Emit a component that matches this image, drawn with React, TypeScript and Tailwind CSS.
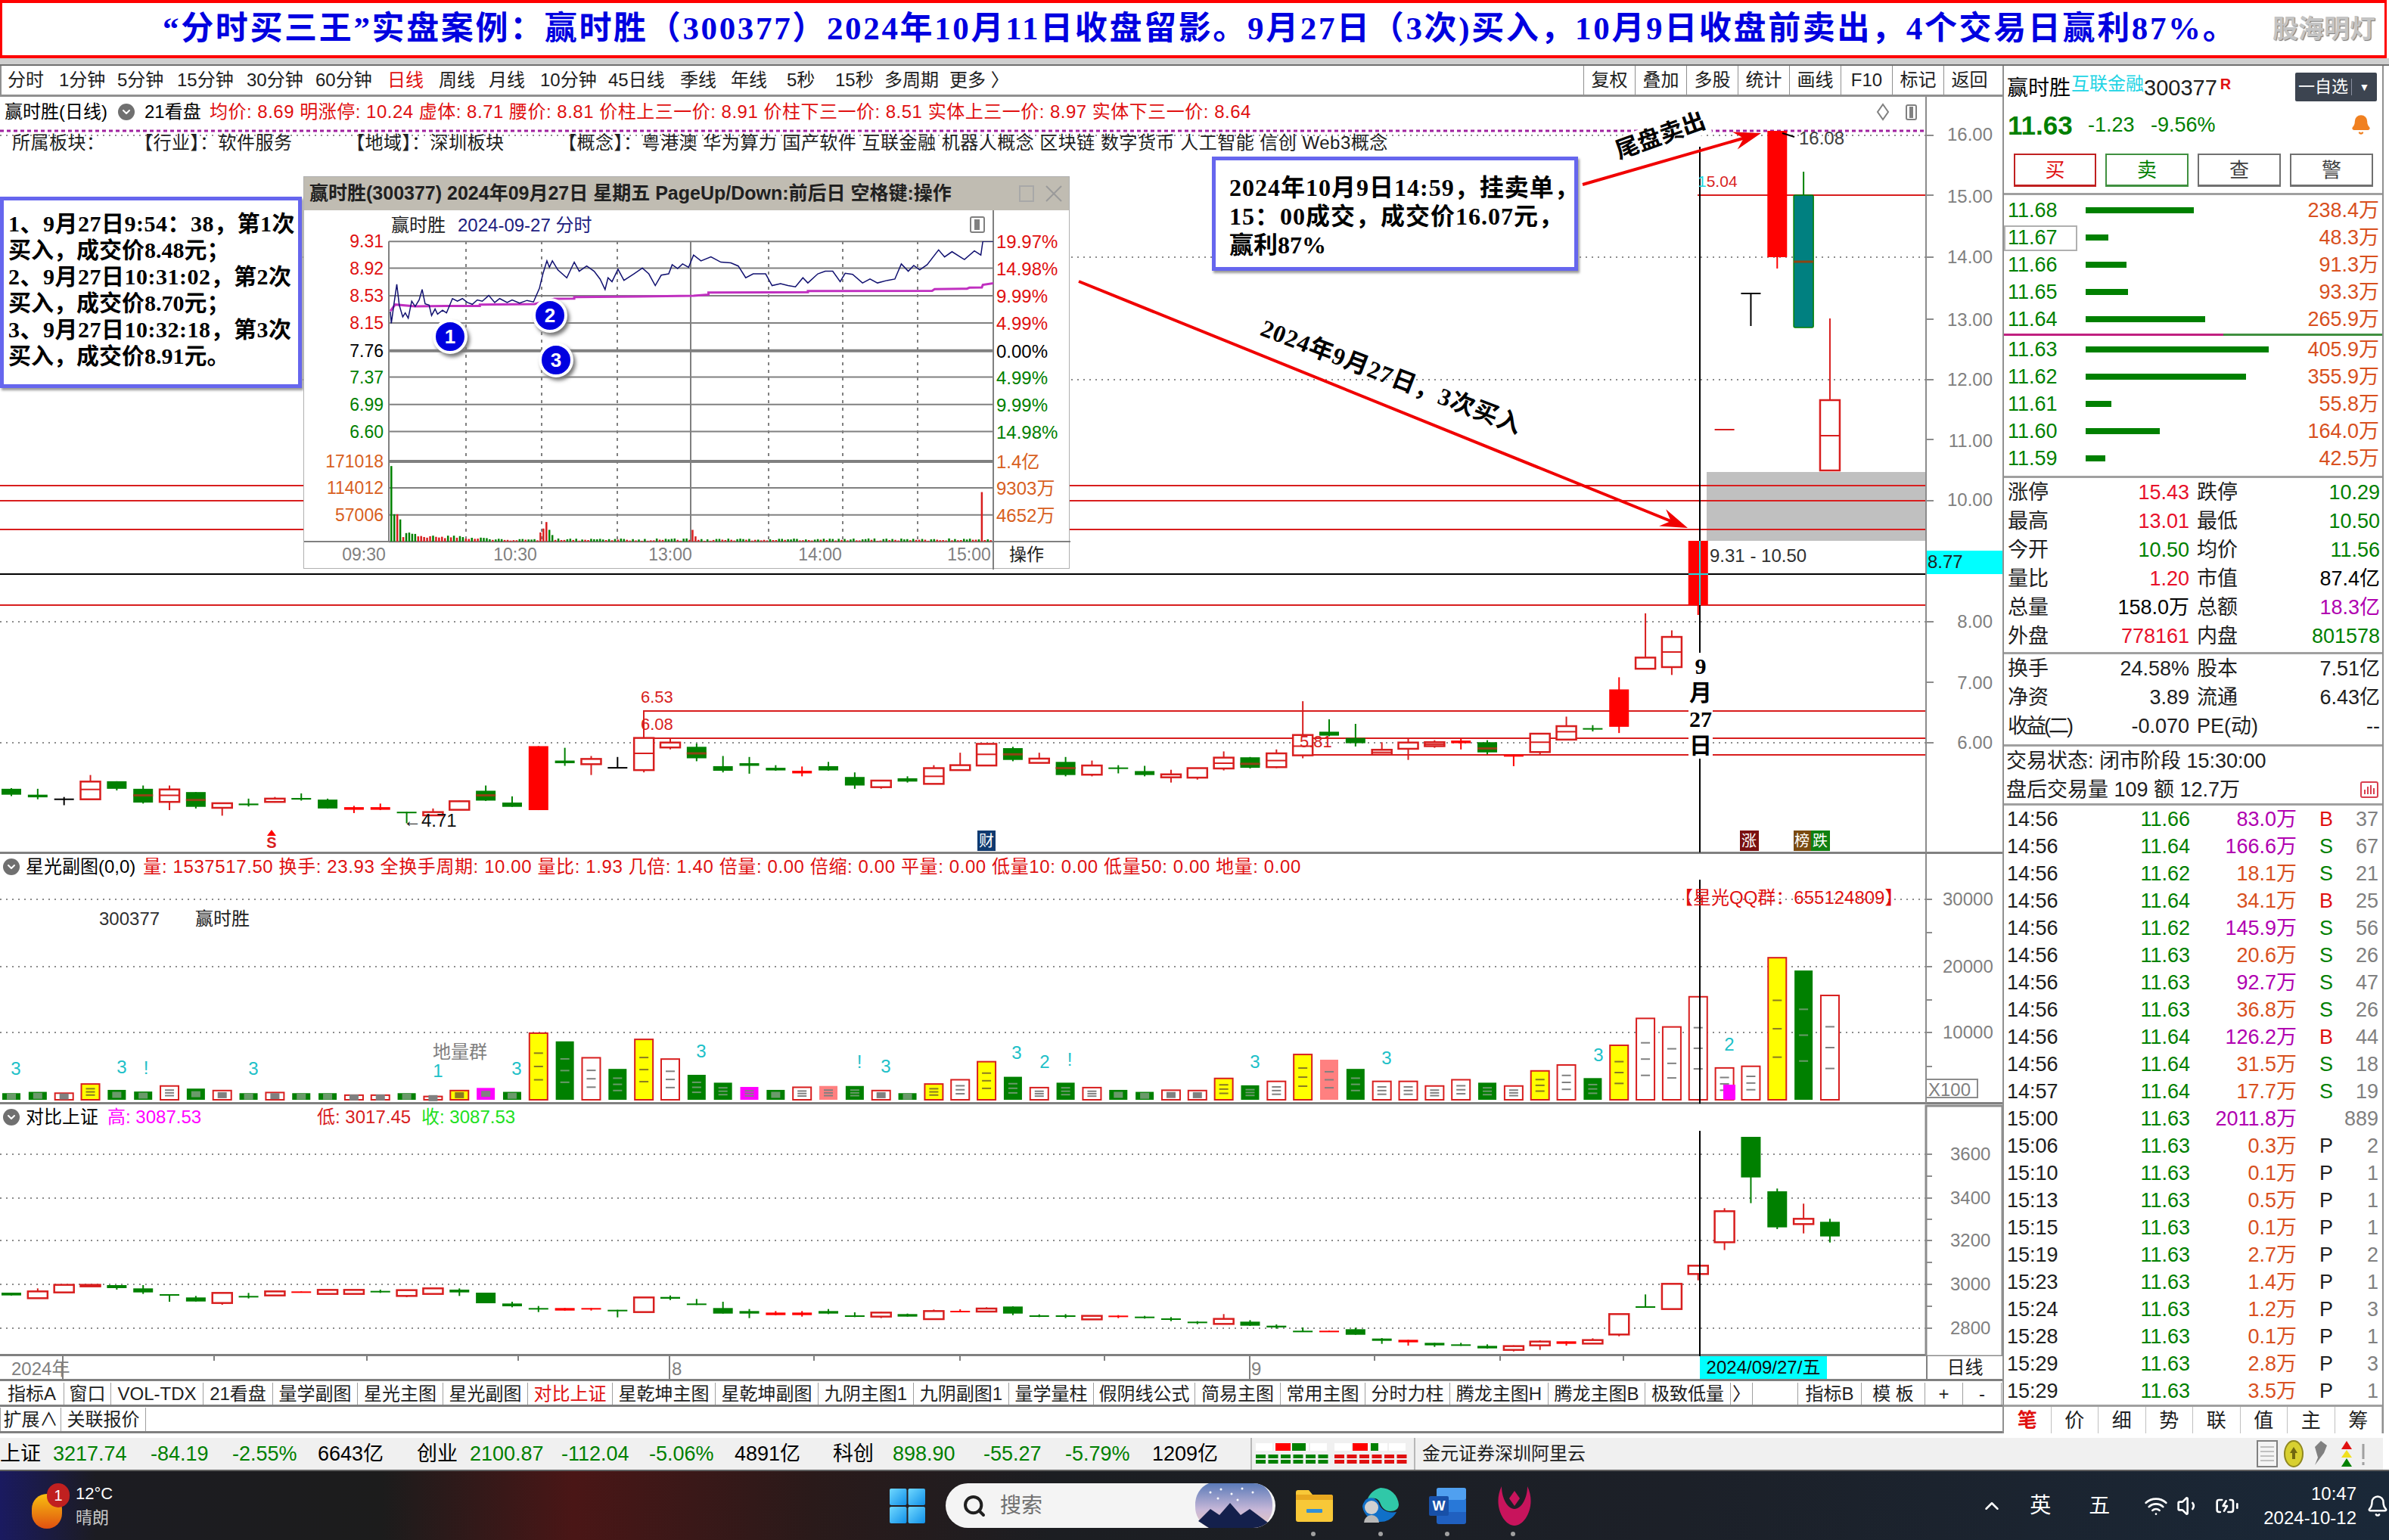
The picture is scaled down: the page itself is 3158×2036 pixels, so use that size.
import { Bell, ChevronDown, ChevronUp, Search, Volume1, Wifi, BatteryCharging } from "lucide-react";

const SANS = "font-['Liberation_Sans','Noto_Sans_CJK_SC',sans-serif]";
const SERIF = "font-['Liberation_Serif','Noto_Sans_CJK_SC',serif]";

const RED = "#ff0000";
const HOLLOW = "#d81e1e";
const GREEN = "#008000";
const GRID = "#8c8c8c";

// measured off the zoomed crops, converted to page px
const step = (i: number) => 15 + 34.84 * i;
const mainY = (z: number) => 800 + z / 2.306;
const compY = (z: number) => 1440 + z / 3;

// kind: g green, r hollow red, s solid red, k black | hi, top, bottom, lo, mid
type Candle = [string, number, number, number, number, number?];

const mainCandles: Candle[] = [
  ["g", 558, 560, 578, 582], ["g", 560, 578, 586, 592], ["k", 585, 592, 593, 610], ["r", 518, 538, 592, 592, 562],
  ["g", 537, 537, 560, 565], ["g", 550, 560, 602, 605, 580], ["r", 550, 562, 600, 625, 580], ["g", 570, 570, 615, 620, 594],
  ["r", 602, 604, 618, 642], ["g", 590, 605, 610, 614], ["r", 585, 590, 600, 602], ["g", 574, 588, 593, 596],
  ["g", 590, 593, 620, 620], ["s", 612, 616, 624, 634], ["s", 605, 616, 624, 625], ["g", 630, 630, 633, 665],
  ["r", 620, 631, 641, 641], ["r", 595, 598, 624, 624], ["g", 550, 566, 596, 597, 580], ["g", 583, 602, 615, 615],
  ["s", 430, 430, 625, 625], ["g", 435, 474, 482, 490], ["r", 460, 469, 485, 518], ["k", 463, 496, 498, 498],
  ["r", 405, 405, 503, 510, 452], ["r", 405, 419, 434, 440], ["g", 422, 432, 467, 476, 452], ["g", 460, 491, 505, 510],
  ["g", 463, 482, 490, 514], ["g", 488, 496, 504, 505], ["s", 492, 505, 513, 522], ["g", 478, 491, 504, 505],
  ["g", 510, 524, 550, 560], ["r", 534, 535, 555, 560], ["g", 522, 528, 538, 541], ["r", 488, 497, 545, 545, 522],
  ["r", 450, 488, 503, 504], ["r", 423, 423, 489, 489, 455], ["g", 432, 436, 472, 476, 455], ["r", 450, 468, 481, 482],
  ["g", 463, 478, 518, 522, 497], ["r", 474, 489, 517, 522], ["g", 488, 495, 499, 513], ["g", 490, 506, 518, 522],
  ["r", 502, 516, 525, 541], ["r", 497, 497, 526, 532], ["r", 446, 465, 498, 504, 482], ["g", 463, 464, 496, 498, 484],
  ["r", 440, 452, 494, 497, 474], ["r", 293, 396, 458, 467, 430], ["g", 348, 386, 398, 400], ["g", 362, 405, 421, 431],
  ["r", 418, 441, 456, 456, 449], ["r", 408, 419, 438, 472], ["r", 412, 418, 430, 435, 424], ["s", 406, 413, 421, 440],
  ["g", 412, 418, 449, 455, 437], ["s", 455, 456, 462, 491], ["r", 392, 392, 448, 456, 418], ["r", 340, 369, 410, 412, 386],
  ["g", 366, 375, 378, 385], ["s", 220, 257, 371, 390], ["r", 25, 160, 194, 194], ["r", 77, 97, 189, 213, 143],
];

// the last candles sit higher than the crop above, so page px directly
const lastCandles: [string, number, number, number, number, number?][] = [
  ["s", 715, 715, 800, 813],
  ["d", 568, 568, 568, 568],
  ["k", 388, 388, 388, 431],
  ["s", 173, 173, 340, 355],
  ["t", 227, 258, 433, 433, 346],
  ["r", 421, 529, 622, 622, 576],
];

const compCandles: Candle[] = [
  ["g", 807, 807, 818, 818], ["r", 790, 802, 829, 830], ["r", 776, 776, 806, 806], ["r", 776, 776, 782, 782],
  ["g", 777, 777, 789, 795], ["g", 777, 790, 806, 812], ["g", 813, 813, 818, 843], ["g", 820, 826, 842, 842],
  ["r", 807, 808, 848, 855], ["g", 808, 820, 825, 830], ["r", 801, 802, 818, 818], ["s", 802, 802, 806, 806],
  ["r", 795, 796, 812, 812], ["r", 795, 796, 812, 812], ["g", 795, 800, 805, 808], ["r", 796, 797, 820, 825],
  ["r", 790, 790, 812, 812], ["g", 790, 795, 806, 820], ["g", 807, 807, 849, 849], ["g", 843, 850, 861, 865],
  ["g", 860, 868, 873, 884], ["s", 868, 868, 878, 878], ["s", 868, 868, 873, 878], ["g", 875, 875, 880, 905],
  ["r", 825, 826, 884, 884], ["g", 818, 824, 831, 836], ["g", 832, 850, 854, 856], ["g", 843, 868, 890, 890],
  ["g", 872, 880, 890, 908], ["s", 880, 886, 896, 897], ["s", 880, 886, 896, 902], ["g", 872, 880, 890, 892],
  ["g", 885, 897, 902, 904], ["r", 882, 886, 902, 908], ["g", 890, 892, 902, 902], ["r", 874, 880, 912, 914],
  ["s", 873, 879, 884, 884], ["r", 865, 870, 882, 882], ["g", 861, 862, 890, 896], ["g", 893, 897, 902, 904],
  ["g", 892, 897, 902, 908], ["r", 897, 899, 913, 914], ["s", 896, 898, 903, 908], ["g", 899, 902, 907, 910],
  ["g", 904, 909, 914, 920], ["g", 920, 922, 926, 932], ["r", 892, 911, 931, 932], ["g", 916, 922, 938, 939],
  ["g", 933, 938, 945, 950], ["g", 945, 958, 961, 962], ["s", 958, 958, 962, 962], ["g", 946, 952, 974, 974],
  ["g", 987, 989, 998, 1010], ["s", 994, 994, 1004, 1017], ["g", 1006, 1006, 1016, 1022], ["g", 1006, 1012, 1016, 1018],
  ["g", 1012, 1018, 1028, 1029], ["r", 1016, 1019, 1034, 1040], ["r", 996, 1001, 1016, 1034], ["s", 1000, 1000, 1010, 1017],
  ["r", 988, 995, 1009, 1010], ["r", 892, 892, 973, 980], ["g", 814, 861, 865, 866], ["r", 772, 772, 872, 872],
  ["r", 700, 700, 733, 758], ["r", 472, 484, 607, 638], ["g", 189, 189, 350, 452], ["g", 394, 405, 548, 555],
  ["r", 454, 514, 535, 572], ["g", 514, 526, 584, 608],
];

const volumes: [string, number][] = [
  ["g", 1488], ["g", 1484], ["r", 1488], ["y", 1460], ["g", 1478], ["g", 1483], ["r", 1466], ["g", 1474], ["r", 1480], ["g", 1488],
  ["r", 1486], ["g", 1488], ["g", 1488], ["r", 1494], ["r", 1494], ["g", 1488], ["r", 1498], ["y", 1480], ["m", 1472], ["g", 1484],
  ["y", 1305], ["g", 1330], ["r", 1380], ["g", 1414], ["y", 1324], ["r", 1384], ["g", 1432], ["g", 1456], ["m", 1469], ["g", 1478],
  ["r", 1470], ["p", 1466], ["g", 1466], ["r", 1480], ["g", 1488], ["y", 1460], ["r", 1447], ["y", 1392], ["g", 1438], ["r", 1471],
  ["g", 1456], ["r", 1471], ["g", 1478], ["g", 1484], ["r", 1479], ["r", 1480], ["y", 1443], ["g", 1464], ["r", 1452], ["y", 1370],
  ["p", 1386], ["g", 1414], ["r", 1452], ["r", 1452], ["r", 1466], ["r", 1447], ["g", 1456], ["r", 1466], ["y", 1420], ["r", 1402],
  ["g", 1442], ["y", 1342], ["r", 1260], ["r", 1286], ["r", 1194], ["r", 1411], ["r", 1406], ["y", 1075], ["g", 1114], ["r", 1190],
];

const volNotes: [number, number, string][] = [
  [21, 1412, "3"], [161, 1408, "3"], [193, 1410, "!"], [335, 1412, "3"], [579, 1420, "1"], [683, 1412, "3"], [927, 1360, "3"],
  [1136, 1392, "!"], [1171, 1406, "3"], [1344, 1365, "3"], [1381, 1392, "2"], [1414, 1385, "!"], [1659, 1392, "3"], [1833, 1380, "3"],
  [2113, 1370, "3"], [2286, 1338, "2"],
];

const bids: [string, string, number, boolean?][] = [
  ["11.68", "238.4万", 143], ["11.67", "48.3万", 30, true], ["11.66", "91.3万", 54], ["11.65", "93.3万", 56], ["11.64", "265.9万", 158],
];
const asks: [string, string, number][] = [
  ["11.63", "405.9万", 242], ["11.62", "355.9万", 212], ["11.61", "55.8万", 34], ["11.60", "164.0万", 98], ["11.59", "42.5万", 26],
];

const stats: [string, string, string, string, string, string][] = [
  ["涨停", "15.43", "text-[#e8102a]", "跌停", "10.29", "text-[#008000]"],
  ["最高", "13.01", "text-[#e8102a]", "最低", "10.50", "text-[#008000]"],
  ["今开", "10.50", "text-[#008000]", "均价", "11.56", "text-[#008000]"],
  ["量比", "1.20", "text-[#e8102a]", "市值", "87.4亿", "text-black"],
  ["总量", "158.0万", "text-black", "总额", "18.3亿", "text-[#b000b0]"],
  ["外盘", "778161", "text-[#e8102a]", "内盘", "801578", "text-[#008000]"],
];
const stats2: [string, string, string, string][] = [
  ["换手", "24.58%", "股本", "7.51亿"],
  ["净资", "3.89", "流通", "6.43亿"],
  ["收益(二)", "-0.070", "PE(动)", "--"],
];

const trades: [string, string, string, string, string][] = [
  ["14:56", "11.66", "83.0万", "B", "37"], ["14:56", "11.64", "166.6万", "S", "67"], ["14:56", "11.62", "18.1万", "S", "21"],
  ["14:56", "11.64", "34.1万", "B", "25"], ["14:56", "11.62", "145.9万", "S", "56"], ["14:56", "11.63", "20.6万", "S", "26"],
  ["14:56", "11.63", "92.7万", "S", "47"], ["14:56", "11.63", "36.8万", "S", "26"], ["14:56", "11.64", "126.2万", "B", "44"],
  ["14:56", "11.64", "31.5万", "S", "18"], ["14:57", "11.64", "17.7万", "S", "19"], ["15:00", "11.63", "2011.8万", "", "889"],
  ["15:06", "11.63", "0.3万", "P", "2"], ["15:10", "11.63", "0.1万", "P", "1"], ["15:13", "11.63", "0.5万", "P", "1"],
  ["15:15", "11.63", "0.1万", "P", "1"], ["15:19", "11.63", "2.7万", "P", "2"], ["15:23", "11.63", "1.4万", "P", "1"],
  ["15:24", "11.63", "1.2万", "P", "3"], ["15:28", "11.63", "0.1万", "P", "1"], ["15:29", "11.63", "2.8万", "P", "3"],
  ["15:29", "11.63", "3.5万", "P", "1"],
];

const tabs: [string, string][] = [
  ["指标A", "w-[85px]"], ["窗口", "w-[62px]"], ["VOL-TDX", "w-[122px]"], ["21看盘", "w-[92px]"], ["量学副图", "w-[112px]"],
  ["星光主图", "w-[113px]"], ["星光副图", "w-[112px]"], ["对比上证", "w-[112px] text-[#e01010]"], ["星乾坤主图", "w-[136px]"],
  ["星乾坤副图", "w-[136px]"], ["九阴主图1", "w-[126px]"], ["九阴副图1", "w-[126px]"], ["量学量柱", "w-[112px]"], ["假阴线公式", "w-[134px]"],
  ["简易主图", "w-[113px]"], ["常用主图", "w-[112px]"], ["分时力柱", "w-[112px]"], ["腾龙主图H", "w-[130px]"], ["腾龙主图B", "w-[128px]"],
  ["极致低量", "w-[113px]"], ["〉", "w-[29px]"], ["", "w-[60px]"], ["指标B", "w-[84px]"], ["模 板", "w-[84px]"], ["+", "w-[50px]"], ["-", "w-[51px]"],
];

const periods: [string, string][] = [
  ["分时", "w-[68px]"], ["1分钟", "w-[77px]"], ["5分钟", "w-[79px]"], ["15分钟", "w-[92px]"], ["30分钟", "w-[91px]"], ["60分钟", "w-[95px]"],
  ["日线", "w-[68px] text-[#e01010]"], ["周线", "w-[66px]"], ["月线", "w-[68px]"], ["10分钟", "w-[90px]"], ["45日线", "w-[95px]"], ["季线", "w-[67px]"],
  ["年线", "w-[74px]"], ["5秒", "w-[64px]"], ["15秒", "w-[65px]"], ["多周期", "w-[86px]"], ["更多 〉", "w-[80px]"],
];
const tools = ["复权", "叠加", "多股", "统计", "画线", "F10", "标记", "返回"];

const market: [string, string][] = [
  ["上证", "w-[70px] text-black"], ["3217.74", "w-[129px] text-[#008000]"], ["-84.19", "w-[108px] text-[#008000]"], ["-2.55%", "w-[113px] text-[#008000]"],
  ["6643亿", "w-[131px] text-black"], ["创业", "w-[70px] text-black"], ["2100.87", "w-[121px] text-[#008000]"], ["-112.04", "w-[116px] text-[#008000]"],
  ["-5.06%", "w-[113px] text-[#008000]"], ["4891亿", "w-[130px] text-black"], ["科创", "w-[79px] text-black"], ["898.90", "w-[120px] text-[#008000]"],
  ["-55.27", "w-[108px] text-[#008000]"], ["-5.79%", "w-[115px] text-[#008000]"], ["1209亿", "w-[131px] text-black"],
];

const T = ({ x, y, fill = "#000", size = 24, anchor = "start", bold, children }: {
  x: number; y: number; fill?: string; size?: number; anchor?: "start" | "middle" | "end"; bold?: boolean; children: React.ReactNode;
}) => (
  <text x={x} y={y} fill={fill} fontSize={size} textAnchor={anchor} dominantBaseline="central" fontWeight={bold ? 700 : 400}>
    {children}
  </text>
);

const Dotted = ({ y, x2 = 2546 }: { y: number; x2?: number }) => (
  <line x1={0} x2={x2} y1={y} y2={y} stroke={GRID} strokeWidth={2} strokeDasharray="2 6" />
);

function CandleMark({ x, c, map, w = 26 }: { x: number; c: [string, number, number, number, number, number?]; map: (n: number) => number; w?: number }) {
  const [kind, hi, top, bot, lo, mid] = c;
  const yHi = map(hi), yTop = map(top), yBot = map(bot), yLo = map(lo);
  const l = x - w / 2;
  const h = Math.max(yBot - yTop, 2);
  const stroke = kind === "g" ? GREEN : kind === "t" ? GREEN : kind === "k" ? "#000" : kind === "s" ? RED : HOLLOW;
  return (
    <g>
      <line x1={x} x2={x} y1={yHi} y2={yLo} stroke={stroke} strokeWidth={2} />
      {kind === "r" && <rect x={l} y={yTop} width={w} height={h} fill="#fff" stroke={HOLLOW} strokeWidth={2.5} />}
      {(kind === "g" || kind === "s") && <rect x={l} y={yTop} width={w} height={h} fill={kind === "g" ? GREEN : RED} />}
      {kind === "t" && <rect x={l} y={yTop} width={w} height={h} rx={2} fill="#008080" stroke={GREEN} strokeWidth={1.5} />}
      {kind === "k" && <line x1={l} x2={l + w} y1={yTop} y2={yTop} stroke="#000" strokeWidth={2} />}
      {kind === "d" && <line x1={l} x2={l + w} y1={yTop} y2={yTop} stroke={HOLLOW} strokeWidth={2} />}
      {mid !== undefined && (
        <line x1={l} x2={l + w} y1={map(mid)} y2={map(mid)} stroke={kind === "r" ? HOLLOW : "#8b4513"} strokeWidth={kind === "r" ? 2 : 3} />
      )}
    </g>
  );
}

function VolBar({ x, kind, top }: { x: number; kind: string; top: number }) {
  const yTop = mainY(top);
  const base = 1454;
  const h = base - yTop;
  const l = x - 12;
  const fill = kind === "g" ? GREEN : kind === "m" ? "#ff00ff" : kind === "p" ? "#ff8080" : kind === "y" ? "#ffff00" : "#fff";
  const border = kind === "r" || kind === "y";
  const dash = kind === "y" ? "#8a7a20" : kind === "g" ? "#6a9a6a" : "#808080";
  return (
    <g>
      <rect x={l} y={yTop} width={24} height={h} fill={fill} stroke={border ? HOLLOW : "none"} strokeWidth={2} />
      {h < 16 ? (
        <rect x={x - 6} y={yTop + h / 2 - 4} width={12} height={8} fill={dash} />
      ) : (
        [0.3, 0.5, 0.7].map((f) => <line key={f} x1={x - 6} x2={x + 6} y1={yTop + h * f} y2={yTop + h * f} stroke={dash} strokeWidth={2} />)
      )}
    </g>
  );
}

function Arrow({ x1, y1, x2, y2 }: { x1: number; y1: number; x2: number; y2: number }) {
  const a = Math.atan2(y2 - y1, x2 - x1);
  const pt = (d: number, s: number) => `${x2 - Math.cos(a) * d - Math.sin(a) * s},${y2 - Math.sin(a) * d + Math.cos(a) * s}`;
  return (
    <g>
      <line x1={x1} y1={y1} x2={x2 - Math.cos(a) * 20} y2={y2 - Math.sin(a) * 20} stroke="#f00000" strokeWidth={4} />
      <polygon points={`${x2},${y2} ${pt(36, 12)} ${pt(24, 0)} ${pt(36, -12)}`} fill="#f00000" />
    </g>
  );
}

function MainChart() {
  return (
    <div className="relative h-[1001px] w-full border-b-[3px] border-[#808080]">
      <svg className="absolute inset-0" width={2647} height={1001} viewBox="0 128 2647 1001">
        {[179, 340, 502, 822, 982].map((y) => <Dotted key={y} y={y} />)}
        <line x1={0} x2={2546} y1={173} y2={173} stroke="#a020a0" strokeWidth={3} strokeDasharray="5 4" />
        <rect x={2256} y={624} width={290} height={91} fill="#c0c0c0" />
        {[642, 662, 700, 800].map((y) => <line key={y} x1={0} x2={2546} y1={y} y2={y} stroke={HOLLOW} strokeWidth={2} />)}
        <line x1={2244} x2={2546} y1={258} y2={258} stroke={HOLLOW} strokeWidth={2} />
        <path d="M851 976V940H2546M851 976H2546M1721 998H2546" fill="none" stroke={HOLLOW} strokeWidth={2} />
        {mainCandles.map((c, i) => <CandleMark key={i} x={step(i)} c={c} map={mainY} />)}
        {lastCandles.map((c, i) => <CandleMark key={i} x={step(64 + i)} c={c} map={(n) => n} />)}
        <line x1={2356} x2={2372} y1={176} y2={181} stroke="#000" strokeWidth={2} />
        <line x1={0} x2={2546} y1={759} y2={759} stroke="#000" strokeWidth={2} />
        <line x1={2247} x2={2247} y1={194} y2={1127} stroke="#000" strokeWidth={2} />
        <line x1={2247} x2={2247} y1={715} y2={800} stroke="#20d8e0" strokeWidth={2} />
        <line x1={2232} x2={2258} y1={759} y2={759} stroke="#20d8e0" strokeWidth={2} />
        <T x={2378} y={182} size={24} fill="#404040">16.08</T>
        <T x={2244} y={239} size={21} fill={HOLLOW}><tspan fill="#20d8e0">1</tspan>5.04</T>
        <T x={2260} y={734} size={24} fill="#303030">9.31 - 10.50</T>
        <T x={847} y={921} size={22} fill={HOLLOW}>6.53</T>
        <T x={847} y={957} size={22} fill={HOLLOW}>6.08</T>
        <T x={1718} y={980} size={22} fill={HOLLOW}>5.81</T>
        <T x={533} y={1084} size={24} fill="#101010">←4.71</T>
        <polygon points="359,1097 353,1105 365,1105" fill={RED} />
        <T x={359} y={1114} size={20} fill={HOLLOW} anchor="middle" bold>S</T>
        <g>
          <rect x={1292} y={1098} width={24} height={27} fill="#103a70" />
          <T x={1304} y={1112} size={20} fill="#fff" anchor="middle">财</T>
          <rect x={2300} y={1098} width={25} height={27} fill="#7a1010" />
          <T x={2312} y={1112} size={20} fill="#fff" anchor="middle">涨</T>
          <rect x={2371} y={1098} width={23} height={27} fill="#7a4a10" />
          <T x={2382} y={1112} size={20} fill="#fff" anchor="middle">榜</T>
          <rect x={2394} y={1098} width={25} height={27} fill="#108010" />
          <T x={2406} y={1112} size={20} fill="#fff" anchor="middle">跌</T>
        </g>
        <line x1={2546} x2={2546} y1={128} y2={1127} stroke={GRID} strokeWidth={2} />
        {[179, 258, 340, 422, 502, 581, 662, 822, 902, 982].map((y) => (
          <line key={y} x1={2546} x2={2556} y1={y} y2={y} stroke={GRID} strokeWidth={2} />
        ))}
        {[["16.00", 177], ["15.00", 259], ["14.00", 339], ["13.00", 422], ["12.00", 501], ["11.00", 582], ["10.00", 660], ["8.00", 821], ["7.00", 902], ["6.00", 981]].map(([t, y]) => (
          <T key={t} x={2634} y={y as number} anchor="end" fill="#808080">{t}</T>
        ))}
        <rect x={2547} y={728} width={100} height={31} fill="#00ffff" />
        <T x={2548} y={742} fill="#202020">8.77</T>
        <path d="M2489 138l7 10-7 10-7-10z" fill="none" stroke="#808080" strokeWidth={2} />
        <rect x={2520} y={139} width={13} height={19} rx={2} fill="#fff" stroke="#808080" strokeWidth={2} />
        <rect x={2524} y={141} width={5} height={15} fill="#808080" />
      </svg>

      <div className="relative flex h-[40px] items-center whitespace-nowrap pl-[6px] text-[24px] text-black">
        <span className="w-[150px]">赢时胜(日线)</span>
        <span className="flex h-[22px] w-[22px] items-center justify-center rounded-full bg-[#707070]">
          <ChevronDown size={16} strokeWidth={3} className="text-white" />
        </span>
        <span className="ml-[13px] w-[86px]">21看盘</span>
        <span className="tracking-[0.5px] text-[#e01010]">均价: 8.69 明涨停: 10.24 虚体: 8.71 腰价: 8.81 价柱上三一价: 8.91 价柱下三一价: 8.51 实体上三一价: 8.97 实体下三一价: 8.64</span>
      </div>
      <div className="relative mt-[3px] flex h-[36px] items-center whitespace-nowrap pl-[16px] text-[24px] tracking-[0.5px] text-[#202020]">
        <span className="w-[162px]">所属板块：</span>
        <span className="w-[280px]">【行业】：软件服务</span>
        <span className="w-[280px]">【地域】：深圳板块</span>
        <span>【概念】：粤港澳 华为算力 国产软件 互联金融 机器人概念 区块链 数字货币 人工智能 信创 Web3概念</span>
      </div>

      {/* annotations pasted on top of the chart */}
      <div className={`absolute left-0 top-[132px] h-[253px] w-[399px] whitespace-nowrap border-[5px] border-[#6666ee] bg-white pl-[6px] pt-[13px] text-[30px] font-bold leading-[35px] text-black shadow-[2px_3px_3px_#999] ${SERIF}`}>
        <div className="tracking-[0.5px]">1、9月27日9:54：38，第1次</div>
        <div>买入，成交价8.48元；</div>
        <div className="tracking-[0.5px]">2、9月27日10:31:02，第2次</div>
        <div>买入，成交价8.70元；</div>
        <div className="tracking-[0.5px]">3、9月27日10:32:18，第3次</div>
        <div>买入，成交价8.91元。</div>
      </div>
      <div className={`absolute left-[1602px] top-[79px] h-[151px] w-[484px] whitespace-nowrap border-[5px] border-[#6666ee] bg-white pl-[18px] pt-[17px] text-[32px] font-bold leading-[38px] text-black shadow-[2px_3px_3px_#999] ${SERIF}`}>
        <div className="tracking-[1px]">2024年10月9日14:59，挂卖单，</div>
        <div className="tracking-[1px]">15：00成交，成交价16.07元，</div>
        <div>赢利87%</div>
      </div>

      <Popup />

      <svg className="absolute inset-0" width={2647} height={1001} viewBox="0 128 2647 1001">
        <Arrow x1={2092} y1={244} x2={2328} y2={176} />
        <Arrow x1={1426} y1={372} x2={2231} y2={698} />
      </svg>
      <div className={`absolute left-[2129px] top-[34px] -rotate-[20deg] bg-white px-[4px] text-[31px] font-bold leading-[36px] text-black ${SERIF}`}>尾盘卖出</div>
      <div className={`absolute left-[1656px] top-[352px] rotate-[21deg] whitespace-nowrap text-[32px] font-bold leading-[36px] tracking-[1px] text-black ${SERIF}`}>2024年9月27日，3次买入</div>
      <div className={`absolute left-[2232px] top-[735px] flex w-[32px] flex-col items-center bg-white text-[30px] font-bold leading-[35px] text-black ${SERIF}`}>
        <span>9</span><span>月</span><span>27</span><span>日</span>
      </div>
    </div>
  );
}

// intraday line, in the popup's own measuring units
const priceLine = "190,555 192,600 197,530 203,450 208,530 215,575 220,560 226,580 233,515 240,535 248,510 254,470 260,525 268,530 273,570 280,545 285,565 295,550 303,560 315,505 325,515 335,505 345,520 355,527 365,510 375,515 388,493 400,520 410,505 425,520 435,510 450,522 465,512 478,518 490,465 497,410 505,360 510,385 516,360 527,395 545,425 560,365 570,400 585,380 600,400 612,430 622,470 628,425 636,440 648,392 660,435 680,410 697,388 710,410 723,455 735,415 750,410 757,375 768,390 778,372 790,385 800,338 815,360 835,345 855,365 875,368 890,380 905,425 920,410 945,410 958,455 975,448 990,455 1005,460 1020,425 1030,445 1050,410 1065,400 1080,400 1095,440 1105,408 1120,412 1140,445 1155,430 1170,445 1190,435 1205,430 1218,372 1232,400 1243,378 1255,395 1270,375 1293,318 1305,345 1320,325 1345,355 1365,322 1378,338 1382,285 1403,285";
const avgLine = "190,553 200,528 240,535 300,533 370,533 370,528 480,526 520,506 560,505 560,499 690,497 800,494 830,490 830,482 1030,480 1030,476 1280,475 1285,469 1350,467 1355,463 1380,462 1382,452 1403,446";

const spikes: Record<number, [number, string]> = {
  192: [290, GREEN], 198: [105, GREEN], 204: [105, HOLLOW], 210: [85, GREEN], 492: [35, HOLLOW], 498: [50, HOLLOW], 504: [75, HOLLOW],
  510: [45, GREEN], 516: [25, GREEN], 798: [45, HOLLOW], 804: [20, HOLLOW], 1380: [190, HOLLOW], 1402: [25, "#000"],
};

function volBars() {
  const out: [number, number, string][] = [];
  for (let x = 192; x <= 1402; x += 6) {
    const s = spikes[x];
    const noise = Math.abs(Math.sin(x * 12.9898) * 43758.5453) % 1;
    const early = x < 400 ? 32 * (1 - (x - 190) / 210) : 0;
    if (s) out.push([x, s[0], s[1]]);
    else out.push([x, 3 + noise * 9 + early * (0.5 + noise / 2), noise > 0.5 ? GREEN : HOLLOW]);
  }
  return out;
}

function Badge({ n, className }: { n: number; className: string }) {
  return (
    <div className={`absolute flex h-[46px] w-[46px] items-center justify-center rounded-full border-[4px] border-white bg-[#0000e0] text-[26px] font-bold text-white shadow-[3px_4px_5px_#777] ${className}`}>
      {n}
    </div>
  );
}

function Popup() {
  const hLines: [number, number][] = [[285, 2], [388, 2], [494, 2], [598, 2], [705, 4], [806, 2], [911, 2], [1015, 2], [1130, 4], [1231, 2], [1335, 2], [1438, 2]];
  const left: [string, string][] = [["9.31", "#e01010"], ["8.92", "#e01010"], ["8.53", "#e01010"], ["8.15", "#e01010"], ["7.76", "#000"], ["7.37", GREEN], ["6.99", GREEN], ["6.60", GREEN], ["171018", "#d8601e"], ["114012", "#d8601e"], ["57006", "#d8601e"]];
  const right: [string, string][] = [["19.97%", "#e01010"], ["14.98%", "#e01010"], ["9.99%", "#e01010"], ["4.99%", "#e01010"], ["0.00%", "#000"], ["4.99%", GREEN], ["9.99%", GREEN], ["14.98%", GREEN], ["1.4亿", "#d8601e"], ["9303万", "#d8601e"], ["4652万", "#d8601e"]];
  const ys = [318, 354, 390, 426, 463, 498, 534, 570, 609, 644, 680];
  return (
    <div className="absolute left-[401px] top-[105px] h-[519px] w-[1013px] border border-[#b0b0b0] bg-white">
      <div className="flex h-[44px] items-center justify-between bg-[#c0bcb2] pl-[7px] pr-[8px]">
        <span className="whitespace-nowrap text-[25px] font-bold text-[#202020]">赢时胜(300377) 2024年09月27日 星期五 PageUp/Down:前后日 空格键:操作</span>
        <span className="flex items-center gap-[14px] text-[#9a9a9a]">
          <span className="h-[22px] w-[20px] border-2 border-[#a8a8a8]" />
          <svg width="24" height="24" viewBox="0 0 24 24" stroke="#9a9a9a" strokeWidth={2}><path d="M2 2L22 22M22 2L2 22" /></svg>
        </span>
      </div>
      <svg className="absolute left-[-1px] top-[-1px]" width={1015} height={521} viewBox="400 232 1015 521">
        <T x={516} y={296} size={24} fill="#202020">赢时胜</T>
        <T x={604} y={296} size={24} fill="#202080">2024-09-27 分时</T>
        <rect x={1282} y={286} width={18} height={20} rx={2} fill="#fff" stroke="#808080" strokeWidth={2} />
        <rect x={1287} y={289} width={7} height={14} fill="#808080" />
        {[[615], [715], [815], [1015], [1113], [1212]].map(([x]) => (
          <line key={x} x1={x} x2={x} y1={318} y2={715} stroke="#808080" strokeWidth={2} strokeDasharray="4 6" />
        ))}
        <line x1={912} x2={912} y1={318} y2={715} stroke="#808080" strokeWidth={2} />
        <line x1={513} x2={513} y1={318} y2={715} stroke="#808080" strokeWidth={2} />
        <line x1={1312} x2={1312} y1={277} y2={752} stroke="#808080" strokeWidth={2} />
        {hLines.map(([z, w]) => {
          const y = 220 + z / 2.904;
          return <line key={z} x1={513} x2={1312} y1={y} y2={y} stroke="#808080" strokeWidth={w} />;
        })}
        <line x1={401} x2={1414} y1={715} y2={715} stroke="#808080" strokeWidth={2} />
        <svg x={513} y={318} width={799} height={397} viewBox="187 285 1216 1153" preserveAspectRatio="none">
          {volBars().map(([x, h, c]) => (
            <line key={x} x1={x} x2={x} y1={1438} y2={1438 - h} stroke={c} strokeWidth={2.5} vectorEffect="non-scaling-stroke" />
          ))}
          <polyline points={avgLine} fill="none" stroke="#c030c0" strokeWidth={3} vectorEffect="non-scaling-stroke" />
          <polyline points={priceLine} fill="none" stroke="#101070" strokeWidth={1.5} vectorEffect="non-scaling-stroke" />
        </svg>
        {left.map(([t, c], i) => <T key={i} x={506} y={ys[i]} size={23} anchor="end" fill={c}>{t}</T>)}
        {right.map(([t, c], i) => <T key={i} x={1316} y={ys[i]} size={24} fill={c}>{t}</T>)}
        {[["09:30", 480], ["10:30", 680], ["13:00", 885], ["14:00", 1083], ["15:00", 1280]].map(([t, x]) => (
          <T key={t} x={x as number} y={732} size={23} anchor="middle" fill="#808080">{t}</T>
        ))}
        <T x={1356} y={732} size={23} anchor="middle" fill="#202020">操作</T>
      </svg>
      <Badge n={1} className="left-[170px] top-[188px]" />
      <Badge n={2} className="left-[302px] top-[160px]" />
      <Badge n={3} className="left-[310px] top-[219px]" />
    </div>
  );
}

function SubChart() {
  return (
    <div className="relative h-[331px] w-full border-b-[3px] border-[#808080]">
      <svg className="absolute inset-0" width={2647} height={331} viewBox="0 1129 2647 331">
        {[1189, 1278, 1365].map((y) => <Dotted key={y} y={y} />)}
        {volumes.map(([k, top], i) => <VolBar key={i} x={step(i)} kind={k} top={top} />)}
        <rect x={2278} y={1434} width={16} height={20} fill="#ff00ff" />
        <line x1={2247} x2={2247} y1={1163} y2={1459} stroke="#000" strokeWidth={2} />
        {volNotes.map(([x, z, t], i) => <T key={i} x={x} y={mainY(z)} size={24} fill="#20c0c8" anchor="middle">{t}</T>)}
        <T x={608} y={1390} size={24} fill="#808080" anchor="middle">地量群</T>
        <T x={131} y={1214} size={24} fill="#303030">300377</T>
        <T x={258} y={1214} size={24} fill="#202020">赢时胜</T>
        <T x={2214} y={1186} size={24} fill="#e01010">【星光QQ群：655124809】</T>
        <line x1={2546} x2={2546} y1={1129} y2={1459} stroke={GRID} strokeWidth={2} />
        {[1189, 1233, 1278, 1322, 1365, 1410].map((y) => <line key={y} x1={2546} x2={2554} y1={y} y2={y} stroke={GRID} strokeWidth={2} />)}
        {[["30000", 1188], ["20000", 1277], ["10000", 1364]].map(([t, y]) => (
          <T key={t} x={2568} y={y as number} fill="#808080">{t}</T>
        ))}
        <rect x={2546} y={1427} width={68} height={24} fill="#fff" stroke={GRID} strokeWidth={2} />
        <T x={2549} y={1440} fill="#808080" size={24}>X100</T>
      </svg>
      <div className="relative flex h-[34px] items-center whitespace-nowrap pl-[4px] text-[24px]">
        <span className="flex h-[22px] w-[22px] items-center justify-center rounded-full bg-[#707070]">
          <ChevronDown size={16} strokeWidth={3} className="text-white" />
        </span>
        <span className="ml-[8px] text-black">星光副图(0,0)</span>
        <span className="ml-[10px] tracking-[0.6px] text-[#e01010]">量: 1537517.50 换手: 23.93 全换手周期: 10.00 量比: 1.93 几倍: 1.40 倍量: 0.00 倍缩: 0.00 平量: 0.00 低量10: 0.00 低量50: 0.00 地量: 0.00</span>
      </div>
    </div>
  );
}

function CompareChart() {
  return (
    <div className="relative h-[333px] w-full border-b-[3px] border-[#808080]">
      <svg className="absolute inset-0" width={2647} height={333} viewBox="0 1460 2647 333">
        {[1526, 1584, 1640, 1698, 1756].map((y) => <Dotted key={y} y={y} />)}
        {compCandles.map((c, i) => <CandleMark key={i} x={step(i)} c={c} map={compY} />)}
        <line x1={2247} x2={2247} y1={1495} y2={1793} stroke="#000" strokeWidth={2} />
        <path d="M2546 1462H2647V1793H2546Z" fill="#fff" stroke={GRID} strokeWidth={3} />
        {[1526, 1555, 1584, 1612, 1640, 1669, 1698, 1727, 1756].map((y) => <line key={y} x1={2546} x2={2554} y1={y} y2={y} stroke={GRID} strokeWidth={2} />)}
        {[["3600", 1525], ["3400", 1583], ["3200", 1639], ["3000", 1697], ["2800", 1755]].map(([t, y]) => (
          <T key={t} x={2578} y={y as number} fill="#808080">{t}</T>
        ))}
      </svg>
      <div className="relative flex h-[34px] items-center whitespace-nowrap pl-[4px] text-[24px]">
        <span className="flex h-[22px] w-[22px] items-center justify-center rounded-full bg-[#707070]">
          <ChevronDown size={16} strokeWidth={3} className="text-white" />
        </span>
        <span className="ml-[8px] w-[108px] text-black">对比上证</span>
        <span className="w-[277px] text-[#ff00ff]">高: 3087.53</span>
        <span className="w-[138px] text-[#d81e1e]">低: 3017.45</span>
        <span className="text-[#20e020]">收: 3087.53</span>
      </div>
    </div>
  );
}

function DateAxis() {
  return (
    <div className="relative flex h-[33px] w-full border-b-[3px] border-[#808080] text-[24px] text-[#808080]">
      <svg className="absolute inset-0" width={2647} height={33}>
        {[[83, 30], [283, 6], [485, 6], [685, 6], [885, 30], [1076, 6], [1269, 6], [1460, 6], [1652, 30], [1817, 6], [1983, 6], [2146, 6]].map(([x, h]) => (
          <line key={x} x1={x} x2={x} y1={0} y2={h} stroke="#808080" strokeWidth={2} />
        ))}
        <T x={15} y={16} fill="#808080">2024年</T>
        <T x={888} y={16} fill="#808080">8</T>
        <T x={1654} y={16} fill="#808080">9</T>
      </svg>
      <div className="absolute left-[2247px] flex h-[30px] w-[168px] items-center justify-center bg-[#00ffff] text-[24px] text-[#101010]">2024/09/27/五</div>
      <div className="absolute left-[2546px] flex h-[30px] w-[101px] items-center justify-center border-l-2 border-[#808080] text-[24px] text-[#202020]">日线</div>
    </div>
  );
}

function PanelRow({ price, vol, bar, active }: { price: string; vol: string; bar: number; active?: boolean }) {
  return (
    <div className="relative flex h-[36px] items-center pl-[5px] pr-[4px]">
      {active && <div className="absolute left-0 top-[2px] h-[34px] w-[97px] border-2 border-[#b0b0b0]" />}
      <span className="w-[103px] text-[#008000]">{price}</span>
      <div className="relative h-[8px]">
        <svg width={bar} height={8} className="block"><rect width={bar} height={8} fill={GREEN} /></svg>
      </div>
      <span className="ml-auto text-[#d8501e]">{vol}</span>
    </div>
  );
}

function RightPanel() {
  return (
    <div className="flex h-full w-[504px] flex-col border-x-2 border-[#909090] text-[27px] leading-none">
      <div className="relative flex h-[48px] items-end whitespace-nowrap pl-[4px] pb-[4px]">
        <span className="w-[85px] text-[28px] text-black">赢时胜</span>
        <span className="mb-[8px] w-[96px] text-[24px] text-[#20d4e4]">互联金融</span>
        <span className="text-[29px] text-[#202020]">300377</span>
        <span className="mb-[10px] ml-[4px] text-[20px] font-bold text-[#e01010]">R</span>
        <div className="absolute right-[7px] top-[9px] flex h-[38px] w-[108px] items-center rounded-[2px] bg-[#3c4450] text-[22px] text-white">
          <span className="flex w-[75px] justify-center border-r border-[#8a90a0]">一自选</span>
          <span className="flex flex-1 justify-center text-[14px]">▼</span>
        </div>
      </div>
      <div className="flex h-[60px] items-center pl-[5px] pr-[14px]">
        <span className="w-[106px] text-[35px] font-bold text-[#008000]">11.63</span>
        <span className="w-[83px] text-[#008000]">-1.23</span>
        <span className="text-[#008000]">-9.56%</span>
        <Bell size={28} className="ml-auto fill-[#f08020] text-[#f08020]" />
      </div>
      <div className="flex h-[63px] gap-[12px] border-b-[3px] border-[#a0a0a0] pl-[13px] pt-[8px]">
        <span className="flex h-[44px] w-[109px] items-center justify-center border-2 border-b-[3px] border-[#c02020] text-[26px] text-[#e01010]">买</span>
        <span className="flex h-[44px] w-[110px] items-center justify-center border-2 border-b-[3px] border-[#409040] text-[26px] text-[#008000]">卖</span>
        <span className="flex h-[44px] w-[110px] items-center justify-center border-2 border-b-[3px] border-[#707070] text-[26px] text-[#404040]">查</span>
        <span className="flex h-[44px] w-[110px] items-center justify-center border-2 border-b-[3px] border-[#707070] text-[26px] text-[#404040]">警</span>
      </div>
      <div className="pt-[2px]">
        {bids.map(([p, v, b, a]) => <PanelRow key={p} price={p} vol={v} bar={b} active={a} />)}
      </div>
      <div className="mt-[1px] flex h-[3px] shrink-0">
        <div className="h-full w-[290px] bg-[#c02080]" />
        <div className="h-full flex-1 bg-[#409040]" />
      </div>
      <div className="border-b-[3px] border-[#a0a0a0] pb-[5px]">
        {asks.map(([p, v, b]) => <PanelRow key={p} price={p} vol={v} bar={b} />)}
      </div>
      <div className="border-b-[3px] border-[#a0a0a0] pb-[2px]">
        {stats.map(([a, b, bc, c, d, dc]) => (
          <div key={a} className="flex h-[38px] items-center pl-[5px] pr-[3px]">
            <span className="w-[100px] text-[#202020]">{a}</span>
            <span className={`w-[140px] text-right ${bc}`}>{b}</span>
            <span className="ml-[10px] w-[100px] text-[#202020]">{c}</span>
            <span className={`flex-1 text-right ${dc}`}>{d}</span>
          </div>
        ))}
      </div>
      <div className="h-[122px] border-b-[3px] border-[#a0a0a0]">
        {stats2.map(([a, b, c, d]) => (
          <div key={a} className="flex h-[38px] items-center pl-[5px] pr-[3px] text-[#202020]">
            <span className={`w-[100px] whitespace-nowrap ${a.length > 2 ? "tracking-[-3px]" : ""}`}>{a}</span>
            <span className="w-[140px] text-right">{b}</span>
            <span className="ml-[10px] w-[100px] whitespace-nowrap">{c}</span>
            <span className="flex-1 text-right">{d}</span>
          </div>
        ))}
      </div>
      <div className="h-[78px] border-b-[3px] border-[#a0a0a0] text-[#202020]">
        <div className="flex h-[38px] items-center pl-[3px]">交易状态: 闭市阶段 15:30:00</div>
        <div className="flex h-[38px] items-center px-[3px]">
          <span>盘后交易量 109 额 12.7万</span>
          <svg className="ml-auto mr-[2px]" width="24" height="22" viewBox="0 0 24 22" fill="none" stroke="#d84050" strokeWidth={2}>
            <rect x="1" y="1" width="22" height="20" rx="2" /><path d="M6 17v-6M10 17V7M14 17V5M18 17v-8" />
          </svg>
        </div>
      </div>
      <div className="h-[795px] border-b-[3px] border-[#a0a0a0]">
        {trades.map(([t, p, v, s, n], i) => (
          <div key={i} className="flex h-[36px] items-center pl-[4px] pr-[3px]">
            <span className="w-[110px] shrink-0 text-[#202020]">{t}</span>
            <span className="w-[132px] shrink-0 text-right text-[#008000]">{p}</span>
            <span className={`w-[141px] shrink-0 whitespace-nowrap text-right ${/^(83|166|145|92|126|2011)/.test(v) ? "text-[#b000b0]" : "text-[#d8501e]"}`}>{v}</span>
            <span className={`w-[78px] shrink-0 text-center ${s === "B" ? "text-[#e01010]" : s === "S" ? "text-[#008000]" : "text-[#202020]"}`}>{s}</span>
            <span className="flex w-[30px] shrink-0 justify-end whitespace-nowrap text-[#808080]">{n}</span>
          </div>
        ))}
      </div>
      <div className="flex flex-1 text-[26px] text-[#202020]">
        {["笔", "价", "细", "势", "联", "值", "主", "筹"].map((t, i) => (
          <span key={t} className={`flex flex-1 items-center justify-center border-r border-[#c0c0c0] ${i === 0 ? "font-bold text-[#e01010]" : ""}`}>{t}</span>
        ))}
      </div>
    </div>
  );
}

function StatusBar() {
  return (
    <div className="flex h-[42px] w-[3150px] items-center whitespace-nowrap bg-[#f0f0f0] text-[27px]">
      {market.map(([t, c], i) => <span key={i} className={c}>{t}</span>)}
      <div className="ml-[-1px] flex h-full w-[218px] items-center justify-center border-x-2 border-[#b8b8b8]">
        <svg width="204" height="28" viewBox="0 0 204 28">
          {[0, 1, 2, 3].map((i) => <rect key={i} x={i * 24} y={0} width={22} height={10} fill="#fff" />)}
          <rect x={26} y={0} width={20} height={10} fill={RED} /><rect x={48} y={0} width={18} height={10} fill={GREEN} />
          {[0, 1, 2, 3].map((i) => <rect key={i} x={104 + i * 24} y={0} width={22} height={10} fill="#fff" />)}
          <rect x={128} y={0} width={20} height={10} fill={RED} /><rect x={152} y={0} width={10} height={10} fill={GREEN} />
          {[0, 1, 2, 3, 4, 5].flatMap((i) => [0, 1].map((r) => (
            <g key={`${i}${r}`}>
              <rect x={i * 16.5} y={15 + r * 7} width={13} height={5} fill={GREEN} />
              <rect x={104 + i * 16.5} y={15 + r * 7} width={13} height={5} fill="#e01010" />
            </g>
          )))}
        </svg>
      </div>
      <span className="ml-[9px] text-[24px] text-[#202020]">金元证券深圳阿里云</span>
      <svg className="ml-auto mr-[18px]" width="150" height="38" viewBox="0 0 150 38">
        <rect x="2" y="2" width="26" height="34" fill="#f4f4f4" stroke="#808080" strokeWidth={2} />
        <path d="M6 10h18M6 16h18M6 22h18M6 28h18" stroke="#c0c0c0" strokeWidth={2} />
        <ellipse cx="50" cy="19" rx="12" ry="17" fill="#d8d030" stroke="#908820" strokeWidth={2} />
        <path d="M50 10l5 8h-3v8h-4v-8h-3z" fill="#706810" />
        <path d="M78 34l4-10-4-14 8-8 8 6-4 10-6 8z" fill="#808080" />
        <path d="M120 2l7 11h-14z" fill="#e01010" /><path d="M120 14l7 10h-14z" fill="#f0e020" /><path d="M120 25l7 11h-14z" fill={GREEN} />
        <path d="M142 6v20" stroke="#a0a0a0" strokeWidth={3} /><rect x="140.500" y="30" width="3" height="4" fill="#a0a0a0" />
      </svg>
    </div>
  );
}

function Taskbar() {
  return (
    <div className="relative flex h-[91px] items-center bg-[linear-gradient(90deg,#1a1a60_0%,#1c1c22_4%,#1c1c1c_16%,#4a1616_24%,#2a1a1a_34%,#1c1e22_44%,#1c2028_70%,#1a2838_100%)] text-white">
      <div className="flex w-[176px] items-center pl-[42px]">
        <div className="relative h-[60px] w-[48px]">
          <div className="absolute left-0 top-[14px] h-[46px] w-[40px] rounded-full bg-[linear-gradient(180deg,#f8c010,#e05010)]" />
          <div className="absolute left-[20px] top-0 flex h-[32px] w-[30px] items-center justify-center rounded-full bg-[#c02020] text-[20px]">1</div>
        </div>
        <div className="ml-[10px] flex flex-col gap-[6px] text-[22px] leading-[26px]">
          <span>12°C</span>
          <span className="text-[#c8c8c8]">晴朗</span>
        </div>
      </div>
      <div className="ml-[1000px] flex h-[46px] w-[47px] items-center justify-center">
        <svg width="47" height="46" viewBox="0 0 47 46">
          <defs>
            <linearGradient id="win" x1="0" y1="0" x2="1" y2="1"><stop offset="0" stopColor="#70d8ff" /><stop offset="1" stopColor="#1090e8" /></linearGradient>
          </defs>
          <rect x="0" y="0" width="22.500" height="22" rx="2" fill="url(#win)" /><rect x="24.500" y="0" width="22.500" height="22" rx="2" fill="url(#win)" />
          <rect x="0" y="24" width="22.500" height="22" rx="2" fill="url(#win)" /><rect x="24.500" y="24" width="22.500" height="22" rx="2" fill="url(#win)" />
        </svg>
      </div>
      <div className="ml-[27px] flex h-[59px] w-[436px] items-center overflow-hidden rounded-full bg-[#f4f4f4] pl-[22px] text-[#707070]">
        <Search size={32} strokeWidth={3} className="text-[#202020]" />
        <span className="ml-[18px] text-[28px]">搜索</span>
        <svg className="ml-auto" width="110" height="59" viewBox="0 0 110 59">
          <defs>
            <linearGradient id="sky" x1="0" y1="0" x2="0" y2="1"><stop offset="0" stopColor="#5a7ab8" /><stop offset="0.6" stopColor="#c8b8d8" /><stop offset="1" stopColor="#e8c8c0" /></linearGradient>
          </defs>
          <path d="M22 0h66a28 30 0 0 1 18 30a28 30 0 0 1-18 29H22a28 30 0 0 1 -18-29a28 30 0 0 1 18-30z" fill="url(#sky)" />
          <path d="M8 50l16-16 12 8 14-16 14 16 12-8 24 18-6 7H22z" fill="#14204c" />
          {[[24, 12], [38, 8], [52, 14], [66, 7], [80, 12], [60, 22], [34, 20]].map(([x, y]) => <circle key={x} cx={x} cy={y} r="1.500" fill="#fff" />)}
        </svg>
      </div>
      <div className="ml-[27px] flex items-center gap-[39px]">
        <svg width="49" height="44" viewBox="0 0 49 44">
          <path d="M0 4a3 3 0 0 1 3-3h14l5 6h24a3 3 0 0 1 3 3v30a3 3 0 0 1-3 3H3a3 3 0 0 1-3-3z" fill="#f8c838" />
          <path d="M0 7h46a3 3 0 0 1 3 3v4H0z" fill="#e8a820" />
          <rect x="14" y="26" width="21" height="5" rx="1" fill="#3090d8" />
        </svg>
        <svg width="49" height="48" viewBox="0 0 49 48">
          <path d="M24 0a24 24 0 0 1 24 22c0 6-5 9-11 9-8 0-12-6-14-12-3-6-10-7-17-2A24 24 0 0 1 24 0z" fill="#30c8a8" />
          <path d="M4 16c5-4 12-4 17 3 3 9 10 15 24 13a24 24 0 0 1-45-7c0-3 2-6 4-9z" fill="#1070c8" />
          <circle cx="12" cy="26" r="9" fill="#d0d0d0" /><path d="M2 46a10 10 0 0 1 20 0z" fill="#b8b8b8" />
        </svg>
        <svg width="49" height="48" viewBox="0 0 49 48">
          <rect x="10" y="0" width="39" height="48" rx="3" fill="#2060c0" />
          <rect x="10" y="0" width="39" height="16" rx="3" fill="#50a0f0" />
          <rect x="10" y="16" width="39" height="16" fill="#2878d8" />
          <rect x="0" y="11" width="26" height="26" rx="2" fill="#1850a8" />
          <text x="13" y="24" fill="#fff" fontSize="18" fontWeight={700} textAnchor="middle" dominantBaseline="central">W</text>
        </svg>
        <svg width="50" height="52" viewBox="0 0 50 52">
          <path d="M8 0c-12 24 2 52 17 52s29-28 17-52c0 16-8 30-17 30S8 16 8 0z" fill="#c8145c" />
          <path d="M25 6l7 10-7 10-7-10z" fill="#c8145c" />
        </svg>
      </div>
      <div className="absolute left-[1733px] top-[80px] h-[6px] w-[6px] rounded-full bg-[#a0a0a0]" />
      <div className="absolute left-[1822px] top-[80px] h-[6px] w-[6px] rounded-full bg-[#a0a0a0]" />
      <div className="absolute left-[1910px] top-[80px] h-[6px] w-[6px] rounded-full bg-[#a0a0a0]" />
      <div className="absolute left-[1997px] top-[80px] h-[6px] w-[6px] rounded-full bg-[#a0a0a0]" />
      <div className="ml-auto flex items-center">
        <ChevronUp size={30} />
        <span className="ml-[35px] text-[28px]">英</span>
        <span className="ml-[50px] text-[28px]">五</span>
        <Wifi size={32} className="ml-[45px]" />
        <Volume1 size={32} className="ml-[11px]" />
        <BatteryCharging size={32} className="ml-[19px]" />
        <div className="ml-[32px] flex flex-col items-end gap-[6px] text-[24px] leading-[26px]">
          <span>10:47</span>
          <span>2024-10-12</span>
        </div>
        <Bell size={30} className="ml-[13px]" />
      </div>
    </div>
  );
}

export default function App() {
  return (
    <div className={`flex h-[2036px] w-[3158px] flex-col overflow-hidden bg-white ${SANS}`}>
      <div className="relative flex h-[77px] w-[3155px] items-center whitespace-nowrap border-x-[3px] border-b-[4px] border-t-[4px] border-[#ff0000] pl-[212px]">
        <span className={`text-[43px] font-bold tracking-[2.65px] text-[#0000e0] ${SERIF}`}>
          “分时买三王”实盘案例：赢时胜（300377）2024年10月11日收盘留影。9月27日（3次)买入，10月9日收盘前卖出，4个交易日赢利87%。
        </span>
        <span className="absolute right-[12px] text-[34px] font-bold text-[#c4c4c4] [text-shadow:1px_1px_1px_#777]">股海明灯</span>
      </div>
      <div className="h-[8px] bg-[#cfcfcf]" />
      <div className="h-[2px] bg-[#707070]" />

      <div className="flex h-[1808px]">
        <div className="flex w-[2647px] flex-col">
          <div className="flex h-[41px] items-center justify-between whitespace-nowrap border-b-[3px] border-l-2 border-[#909090] text-[24px] text-[#202020]">
            <div className="flex items-center pl-[8px]">
              {periods.map(([p, w]) => <span key={p} className={w}>{p}</span>)}
            </div>
            <div className="flex h-full">
              {tools.map((t) => <span key={t} className="flex w-[68px] items-center justify-center border-l border-[#909090]">{t}</span>)}
              <span className="w-[10px]" />
            </div>
          </div>
          <MainChart />
          <SubChart />
          <CompareChart />
          <DateAxis />
          <div className="flex h-[34px] whitespace-nowrap border-b-[3px] border-[#808080] pt-[2px] text-[24px] text-[#202020]">
            {tabs.map(([t, w], i) => (
              <span key={i} className={`flex items-center justify-center border-r border-[#a0a0a0] ${w}`}>{t}</span>
            ))}
          </div>
          <div className="flex h-[35px] whitespace-nowrap border-b-[3px] border-[#808080] pt-[1px] text-[24px] text-[#202020]">
            <span className="flex w-[81px] items-center justify-center border-x border-[#a0a0a0]">扩展∧</span>
            <span className="flex w-[112px] items-center justify-center border-r border-[#a0a0a0]">关联报价</span>
          </div>
        </div>
        <RightPanel />
      </div>
      <div className="h-[6px] bg-white" />
      <StatusBar />
      <div className="h-[2px] bg-[#606060]" />
      <Taskbar />
    </div>
  );
}
